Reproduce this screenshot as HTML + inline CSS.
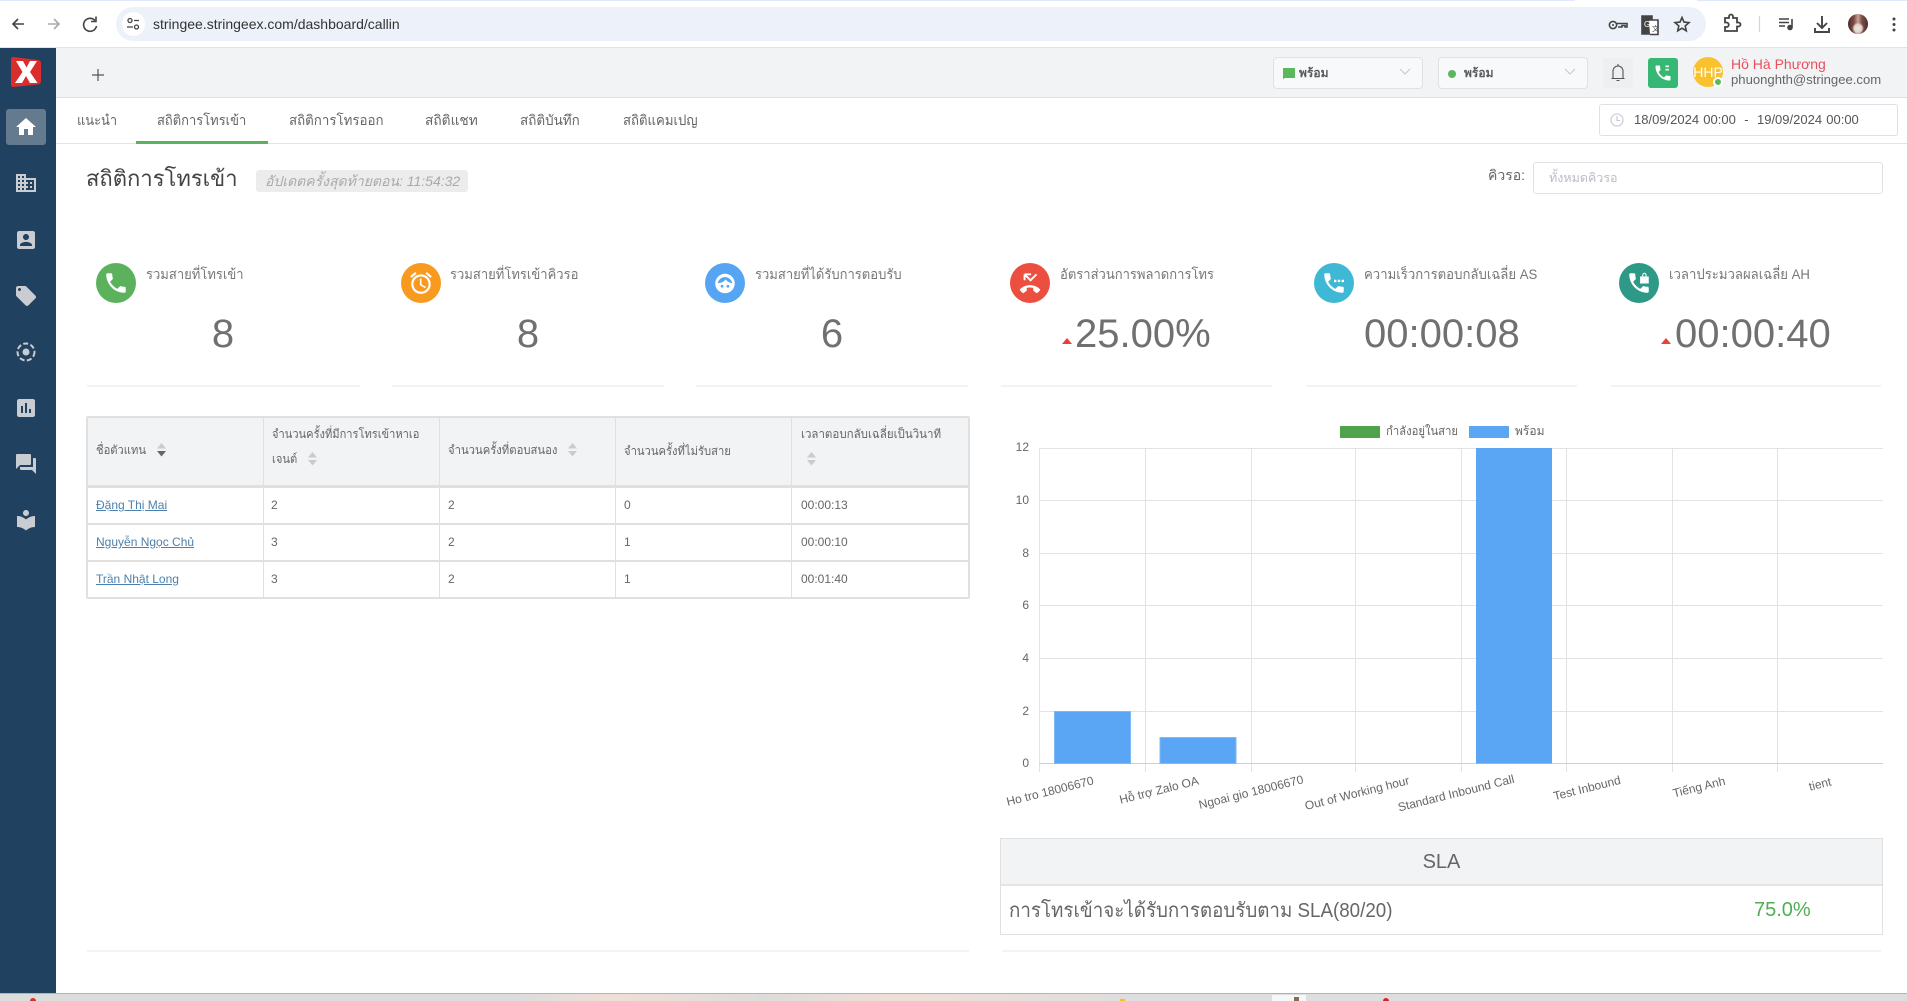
<!DOCTYPE html>
<html lang="th"><head><meta charset="utf-8"><title>Stringee</title>
<style>
html,body{margin:0;padding:0;width:1907px;height:1001px;overflow:hidden;background:#fff}
body{position:relative;font-family:"Liberation Sans","Noto Sans CJK SC",sans-serif;color:#666}
.a{position:absolute}
.t{position:absolute;white-space:nowrap;line-height:20px;height:20px;transform-origin:left center}
.b{position:absolute;box-sizing:border-box}
.ic{position:absolute;border-radius:50%;width:40px;height:40px;top:263px}
.ic svg{position:absolute;left:7px;top:7px;width:26px;height:26px;fill:#fff}
.lb{font-size:14px;color:#777;top:264px;transform:scaleX(.93)}
.n{font-size:40px;color:#707070;top:319px;line-height:30px;height:30px;transform:translateX(-50%)}
.n.l{transform:none}
.dv{position:absolute;height:2px;background:#f3f3f4;top:385px}
.tb{font-size:14px;color:#666;top:110px}
.si{position:absolute;left:14px;width:24px;height:24px;fill:#c9ccd0}
.cl{position:absolute;background:#e0e0e0}
.td{font-size:12px;color:#666}
.th{font-size:12px;color:#666}
.tri{position:absolute;width:0;height:0;border-left:5px solid transparent;border-right:5px solid transparent;border-bottom:6px solid #e8403a;top:338px}
.s{position:absolute;width:11px;height:14px}
a{color:#4d81ad;text-decoration:underline}
</style></head><body>

<!-- Chrome bar -->
<div class="b" style="left:0;top:0;width:1907px;height:48px;background:#fff;border-bottom:1px solid #e3e3e3"></div>
<div class="b" style="left:0;top:0;width:1575px;height:1px;background:#dfe9fb"></div>
<div class="b" style="left:1697px;top:0;width:210px;height:1px;background:#dfe9fb"></div>
<div class="b" style="left:116px;top:7px;width:1590px;height:34px;background:#edf2fa;border-radius:17px"></div>
<div class="b" style="left:122px;top:12px;width:23px;height:24px;background:#fff;border-radius:50%"></div>
<svg class="a" style="left:0;top:0" width="170" height="48" fill="none" stroke="#444" stroke-width="1.6">
<path d="M24 24H13M18 19l-5 5 5 5"/>
<path d="M48 24h11M54 19l5 5-5 5" stroke="#aaa"/>
<path d="M95 20.5A6.5 6.5 0 1 0 96.5 26" /><path d="M96 16.5v5h-5" />
<circle cx="130" cy="20.5" r="2" stroke-width="1.3"/><path d="M134 20.5h5M127 27h6" stroke-width="1.3"/><circle cx="136.5" cy="27" r="2" stroke-width="1.3"/>
</svg>
<div class="t" style="left:153px;top:14px;font-size:14px;color:#333">stringee.stringeex.com/dashboard/callin</div>
<svg class="a" style="left:1600px;top:0" width="307" height="48" fill="none" stroke="#444" stroke-width="1.6">
<circle cx="13" cy="25" r="3.6"/><circle cx="13" cy="25" r="1" fill="#444" stroke="none"/><path d="M17 23.5h10v3.5h-2v-1.5h-3v1.500h-4"/>
<path d="M42 16h10v18H42z" fill="#444"/><path d="M49 20h9v14.500h-8" fill="#fff"/><text x="44" y="27" font-size="8" fill="#fff" stroke="none" font-family="Liberation Sans">G</text><text x="52" y="31" font-size="7" fill="#444" stroke="none" font-family="Liberation Sans">文</text>
<path d="M82 17.500l2 4.600 5 .5-3.800 3.300 1.100 4.900-4.300-2.600-4.300 2.600 1.100-4.900-3.800-3.300 5-.5z"/>
<path d="M125 18h4v-1.500a2 2 0 0 1 4 0V18h4v4.500h1.500a2 2 0 0 1 0 4H137V31h-12v-4h1.500a2.200 2.200 0 0 0 0-4.500H125z" stroke-width="1.8"/>
<path d="M159.500 16v16" stroke="#c7d7f0" stroke-width="1.200"/>
<path d="M179 19h10M179 22.500h10M179 26h6" /><path d="M192 19v8" /><circle cx="190" cy="27.500" r="2" fill="#444"/>
<path d="M222 16v11M217 23l5 5 5-5M215 28v4h14v-4" stroke-width="1.900"/>
<circle cx="294" cy="19" r="1.500" fill="#444" stroke="none"/><circle cx="294" cy="24.500" r="1.500" fill="#444" stroke="none"/><circle cx="294" cy="30" r="1.500" fill="#444" stroke="none"/>
</svg>
<div class="a" style="left:1848px;top:14px;width:20px;height:20px;border-radius:50%;background:radial-gradient(circle at 50% 72%,#efe6e2 0,#e2d3cd 22%,transparent 34%),linear-gradient(90deg,#4a2c2a 0,#7d4d46 30%,#c9a396 50%,#7d4d46 70%,#4a2c2a 100%)"></div>

<!-- Header -->
<div class="b" style="left:56px;top:48px;width:1851px;height:50px;background:#f1f3f5;border-bottom:1px solid #dedfe1"></div>
<svg class="a" style="left:90px;top:67px" width="16" height="16" stroke="#555" stroke-width="1.200"><path d="M8 2v12M2 8h12"/></svg>

<div class="b" style="left:1273px;top:57px;width:150px;height:32px;background:#f8f9fa;border:1px solid #dfe1e6;border-radius:4px"></div>
<svg class="a" style="left:1282px;top:67px" width="14" height="14"><path d="M1 1h12v10H2.500L1 12.500z" fill="#5cb85c"/></svg>
<div class="t" style="left:1299px;top:63px;font-size:12px;font-weight:bold;color:#5a5a5a">พร้อม</div>
<svg class="a" style="left:1398px;top:67px" width="14" height="10" fill="none" stroke="#c4c6cc"><path d="M2 2l5 5 5-5"/></svg>
<div class="b" style="left:1438px;top:57px;width:150px;height:32px;background:#f8f9fa;border:1px solid #dfe1e6;border-radius:4px"></div>
<div class="a" style="left:1448px;top:70px;width:8px;height:8px;border-radius:50%;background:#5cb85c"></div>
<div class="t" style="left:1464px;top:63px;font-size:12px;font-weight:bold;color:#5a5a5a">พร้อม</div>
<svg class="a" style="left:1563px;top:67px" width="14" height="10" fill="none" stroke="#c4c6cc"><path d="M2 2l5 5 5-5"/></svg>

<div class="b" style="left:1603px;top:58px;width:30px;height:30px;background:#eeeff1;border-radius:3px"></div>
<svg class="a" style="left:1610px;top:63px" width="16" height="20" fill="none" stroke="#555" stroke-width="1.100"><path d="M3 15V8a5 5 0 0 1 10 0v7M1.500 15.500h13"/><path d="M8 1v2M6.500 17.500h3"/></svg>
<div class="b" style="left:1648px;top:58px;width:30px;height:30px;background:#36b874;border-radius:3px"></div>
<svg class="a" style="left:1653px;top:63px" width="20" height="20" viewBox="0 0 24 24" fill="#fff"><path d="M6.620 10.790c1.440 2.830 3.760 5.140 6.590 6.590l2.200-2.200c.270-.270.670-.360 1.020-.240 1.120.370 2.330.570 3.570.570.550 0 1 .450 1 1V20c0 .550-.450 1-1 1-9.390 0-17-7.610-17-17 0-.550.450-1 1-1h3.500c.550 0 1 .450 1 1 0 1.250.200 2.450.570 3.570.110.350.030.740-.250 1.020l-2.200 2.200z"/><rect x="15" y="3" width="4" height="2"/><rect x="15" y="7" width="4" height="2"/></svg>
<div class="a" style="left:1693px;top:57px;width:30px;height:30px;border-radius:50%;background:#f9c12d;color:#fff;font-size:14px;line-height:30px;text-align:center;white-space:nowrap;overflow:hidden">HHP</div>
<div class="a" style="left:1713px;top:77px;width:10px;height:10px;border-radius:50%;background:#5cb85c;border:2px solid #fff;box-sizing:border-box"></div>
<div class="t" style="left:1731px;top:54px;font-size:14px;color:#ea4f5a">Hồ Hà Phương</div>
<div class="t" style="left:1731px;top:70px;font-size:13.100px;color:#666">phuonghth@stringee.com</div>

<!-- Sidebar -->
<div class="a" style="left:0;top:48px;width:56px;height:945px;background:#204160"></div>
<svg class="a" style="left:10px;top:56px" width="32" height="32" viewBox="0 0 32 32"><path d="M3 1l25 3q3 .500 3 3v18q0 3-3 3.500L3 31q-2 0-2-3V4q0-3 2-3z" fill="#da2d2c"/><path d="M6 5h7l3.500 6.500L20 5h7l-7 11 7.500 11H20l-4-7-4 7H5l7.500-11z" fill="#fff"/></svg>
<div class="b" style="left:6px;top:109px;width:40px;height:36px;background:#647a8f;border-radius:3px"></div>
<svg class="si" style="top:115px;fill:#fff" viewBox="0 0 24 24"><path d="M10 20v-6h4v6h5v-8h3L12 3 2 12h3v8z"/></svg>
<svg class="si" style="top:171px" viewBox="0 0 24 24"><path d="M12 7V3H2v18h20V7H12zM6 19H4v-2h2v2zm0-4H4v-2h2v2zm0-4H4V9h2v2zm0-4H4V5h2v2zm4 12H8v-2h2v2zm0-4H8v-2h2v2zm0-4H8V9h2v2zm0-4H8V5h2v2zm10 12h-8v-2h2v-2h-2v-2h2v-2h-2V9h8v10zm-2-8h-2v2h2v-2zm0 4h-2v2h2v-2z"/></svg>
<svg class="si" style="top:228px" viewBox="0 0 24 24"><path d="M19 3H5c-1.100 0-2 .900-2 2v14c0 1.100.900 2 2 2h14c1.100 0 2-.900 2-2V5c0-1.100-.900-2-2-2zm-7 3c1.650 0 3 1.350 3 3s-1.350 3-3 3-3-1.350-3-3 1.350-3 3-3zm6 12H6v-1c0-2 4-3.100 6-3.100s6 1.100 6 3.100v1z"/></svg>
<svg class="si" style="top:284px" viewBox="0 0 24 24"><path d="M21.410 11.580l-9-9C12.050 2.220 11.550 2 11 2H4c-1.100 0-2 .900-2 2v7c0 .550.220 1.050.590 1.420l9 9c.360.360.860.580 1.410.580.550 0 1.050-.220 1.410-.590l7-7c.370-.360.590-.860.590-1.410 0-.550-.230-1.060-.590-1.420zM5.500 7C4.670 7 4 6.330 4 5.500S4.670 4 5.500 4 7 4.670 7 5.500 6.330 7 5.500 7z"/></svg>
<svg class="si" style="top:340px" viewBox="0 0 24 24"><circle cx="12" cy="12" r="8.500" fill="none" stroke="#c9ccd0" stroke-width="2" stroke-dasharray="5 2.400"/><circle cx="12" cy="12" r="3.500"/></svg>
<svg class="si" style="top:396px" viewBox="0 0 24 24"><path d="M19 3H5c-1.100 0-2 .900-2 2v14c0 1.100.900 2 2 2h14c1.100 0 2-.900 2-2V5c0-1.100-.900-2-2-2zM9 17H7v-7h2v7zm4 0h-2V7h2v10zm4 0h-2v-4h2v4z"/></svg>
<svg class="si" style="top:452px" viewBox="0 0 24 24"><path d="M21 6h-2v9H6v2c0 .550.450 1 1 1h11l4 4V7c0-.550-.450-1-1-1zm-4 6V3c0-.550-.450-1-1-1H3c-.550 0-1 .450-1 1v14l4-4h10c.550 0 1-.450 1-1z"/></svg>
<svg class="si" style="top:508px" viewBox="0 0 24 24"><path d="M12 11.550C9.640 9.350 6.480 8 3 8v11c3.480 0 6.640 1.350 9 3.550 2.360-2.190 5.520-3.550 9-3.550V8c-3.480 0-6.640 1.350-9 3.550zM12 8c1.660 0 3-1.340 3-3s-1.340-3-3-3-3 1.340-3 3 1.340 3 3 3z"/></svg>

<!-- Tabs -->
<div class="b" style="left:56px;top:143px;width:1851px;height:1px;background:#e2e3e5"></div>
<div class="b" style="left:136px;top:141px;width:132px;height:3px;background:#5cb25c"></div>
<div class="t tb" style="left:77px;transform:scaleX(.92)">แนะนำ</div>
<div class="t tb" style="left:157px;transform:scaleX(.925)">สถิติการโทรเข้า</div>
<div class="t tb" style="left:289px;transform:scaleX(.95)">สถิติการโทรออก</div>
<div class="t tb" style="left:425px;transform:scaleX(.98)">สถิติแชท</div>
<div class="t tb" style="left:520px;transform:scaleX(.96)">สถิติบันทึก</div>
<div class="t tb" style="left:623px;transform:scaleX(.94)">สถิติแคมเปญ</div>
<div class="b" style="left:1599px;top:104px;width:299px;height:32px;background:#fff;border:1px solid #dfe1e6;border-radius:3px"></div>
<svg class="a" style="left:1610px;top:113px" width="14" height="14" fill="none" stroke="#c5c8d4" stroke-width="1.100"><circle cx="7" cy="7" r="6"/><path d="M7 3v4.500h3"/></svg>
<div class="t" style="left:1634px;top:110px;font-size:13px;color:#555;word-spacing:.6px">18/09/2024 00:00 &nbsp;-&nbsp; 19/09/2024 00:00</div>

<!-- Title -->
<div class="t" style="left:86px;top:167px;font-size:22px;line-height:24px;height:24px;color:#444">สถิติการโทรเข้า</div>
<div class="b" style="left:256px;top:170px;width:212px;height:22px;background:#ececec;border-radius:3px"></div>
<div class="t" style="left:265px;top:171px;font-size:14px;font-style:italic;color:#aaa">อัปเดตครั้งสุดท้ายตอน: 11:54:32</div>
<div class="t" style="left:1488px;top:165px;font-size:14px;color:#666">คิวรอ:</div>
<div class="b" style="left:1533px;top:162px;width:350px;height:32px;background:#fff;border:1px solid #dfe1e6;border-radius:3px"></div>
<div class="t" style="left:1549px;top:168px;font-size:12.500px;color:#bbbcc5">ทั้งหมดคิวรอ</div>

<!-- Stats -->
<div class="ic" style="left:96px;background:#5cb25c"><svg viewBox="0 0 24 24"><path d="M6.620 10.790c1.440 2.830 3.760 5.140 6.590 6.590l2.200-2.200c.270-.270.670-.360 1.020-.240 1.120.370 2.330.570 3.570.570.550 0 1 .450 1 1V20c0 .550-.450 1-1 1-9.390 0-17-7.610-17-17 0-.550.450-1 1-1h3.500c.550 0 1 .450 1 1 0 1.250.200 2.450.570 3.570.110.350.030.740-.250 1.020l-2.200 2.200z"/></svg></div>
<div class="t lb" style="left:146px">รวมสายที่โทรเข้า</div>
<div class="t n" style="left:223px">8</div>
<div class="dv" style="left:87px;width:273px"></div>

<div class="ic" style="left:401px;background:#f99a20"><svg viewBox="0 0 24 24"><path d="M22 5.720l-4.600-3.860-1.290 1.530 4.600 3.860L22 5.720zM7.880 3.390L6.600 1.860 2 5.710l1.290 1.530 4.590-3.850zM12.500 8H11v6l4.750 2.850.75-1.230-4-2.370V8zM12 4c-4.970 0-9 4.030-9 9s4.030 9 9 9 9-4.030 9-9-4.030-9-9-9zm0 16c-3.870 0-7-3.130-7-7s3.130-7 7-7 7 3.130 7 7-3.130 7-7 7z"/></svg></div>
<div class="t lb" style="left:450px">รวมสายที่โทรเข้าคิวรอ</div>
<div class="t n" style="left:528px">8</div>
<div class="dv" style="left:392px;width:272px"></div>

<div class="ic" style="left:705px;background:#56a5f2"><svg viewBox="0 0 24 24"><circle cx="12" cy="12.500" r="9"/><path d="M5.300 12.200A6.800 6.800 0 0 1 18.700 12.200Q15 11.800 12.500 8.800Q10.500 12 5.300 12.200z" fill="#56a5f2"/><circle cx="9.300" cy="15" r="1.300" fill="#56a5f2"/><circle cx="14.700" cy="15" r="1.300" fill="#56a5f2"/></svg></div>
<div class="t lb" style="left:755px">รวมสายที่ได้รับการตอบรับ</div>
<div class="t n" style="left:832px">6</div>
<div class="dv" style="left:696px;width:272px"></div>

<div class="ic" style="left:1010px;background:#ec4f3f"><svg viewBox="0 0 24 24"><path d="M12 14c-3 0-6 1-9 3.500-.500.500-.500 1 0 1.500l2 2c.500.500 1 .500 1.500 0l2.500-2v-2.500c2-.500 4-.500 6 0V19l2.500 2c.500.500 1 .500 1.500 0l2-2c.500-.500.500-1 0-1.500C18 15 15 14 12 14z"/><path d="M7 4h6M7 4v5.500M7.500 4.500l5 5L18 4" fill="none" stroke="#fff" stroke-width="1.800"/></svg></div>
<div class="t lb" style="left:1060px">อัตราส่วนการพลาดการโทร</div>
<div class="tri" style="left:1062px"></div>
<div class="t n l" style="left:1075px">25.00%</div>
<div class="dv" style="left:1001px;width:271px"></div>

<div class="ic" style="left:1314px;background:#3eb8d4"><svg viewBox="0 0 24 24"><path d="M6.620 10.790c1.440 2.830 3.760 5.140 6.590 6.590l2.200-2.200c.270-.270.670-.360 1.020-.240 1.120.370 2.330.570 3.570.570.550 0 1 .450 1 1V20c0 .550-.450 1-1 1-9.390 0-17-7.610-17-17 0-.550.450-1 1-1h3.500c.550 0 1 .450 1 1 0 1.250.200 2.450.570 3.570.110.350.030.740-.250 1.020l-2.200 2.200z"/><rect x="12" y="9" width="2.200" height="2.200"/><rect x="15.500" y="9" width="2.200" height="2.200"/><rect x="19" y="9" width="2.200" height="2.200"/></svg></div>
<div class="t lb" style="left:1364px;transform:scaleX(.94)">ความเร็วการตอบกลับเฉลี่ย AS</div>
<div class="t n l" style="left:1364px">00:00:08</div>
<div class="dv" style="left:1306px;width:271px"></div>

<div class="ic" style="left:1619px;background:#2d9986"><svg viewBox="0 0 24 24"><path d="M6.620 10.790c1.440 2.830 3.760 5.140 6.590 6.590l2.200-2.200c.270-.270.670-.360 1.020-.240 1.120.370 2.330.570 3.570.570.550 0 1 .450 1 1V20c0 .550-.450 1-1 1-9.390 0-17-7.610-17-17 0-.550.450-1 1-1h3.500c.550 0 1 .450 1 1 0 1.250.200 2.450.570 3.570.110.350.030.740-.250 1.020l-2.200 2.200z"/><path d="M13 6h8v6.500h-8zM15 6V4.500a2 2 0 0 1 4 0V6h-1V4.500a1 1 0 0 0-2 0V6z"/></svg></div>
<div class="t lb" style="left:1669px;transform:scaleX(.94)">เวลาประมวลผลเฉลี่ย AH</div>
<div class="tri" style="left:1661px"></div>
<div class="t n l" style="left:1675px">00:00:40</div>
<div class="dv" style="left:1611px;width:270px"></div>

<!-- Table -->
<div class="b" style="left:86px;top:416px;width:884px;height:183px;border:2px solid #e0e0e0;border-bottom-width:2px;border-radius:2px"></div>
<div class="b" style="left:88px;top:418px;width:880px;height:67px;background:#f1f3f5"></div>
<div class="cl" style="left:88px;top:485px;width:880px;height:3px"></div>
<div class="cl" style="left:88px;top:523px;width:880px;height:2px"></div>
<div class="cl" style="left:88px;top:560px;width:880px;height:2px"></div>
<div class="cl" style="left:263px;top:418px;width:1px;height:180px"></div>
<div class="cl" style="left:439px;top:418px;width:1px;height:180px"></div>
<div class="cl" style="left:615px;top:418px;width:1px;height:180px"></div>
<div class="cl" style="left:791px;top:418px;width:1px;height:180px"></div>

<div class="t th" style="left:96px;top:440px;transform:scaleX(.93)">ชื่อตัวแทน</div>
<div class="t th" style="left:272px;top:424px;transform:scaleX(.925)">จำนวนครั้งที่มีการโทรเข้าหาเอ</div>
<div class="t th" style="left:272px;top:449px;transform:scaleX(.93)">เจนต์</div>
<div class="t th" style="left:448px;top:440px;transform:scaleX(.94)">จำนวนครั้งที่ตอบสนอง</div>
<div class="t th" style="left:624px;top:441px;transform:scaleX(.935)">จำนวนครั้งที่ไม่รับสาย</div>
<div class="t th" style="left:801px;top:424px;transform:scaleX(.96)">เวลาตอบกลับเฉลี่ยเป็นวินาที</div>
<svg class="s" style="left:156px;top:443px"><path d="M5.500 0L10 5.500H1z" fill="#c9cbd0"/><path d="M1 8h9l-4.500 5.500z" fill="#666"/></svg>
<svg class="s" style="left:307px;top:452px"><path d="M5.500 0L10 5.500H1z" fill="#c9cbd0"/><path d="M1 8h9l-4.500 5.500z" fill="#c9cbd0"/></svg>
<svg class="s" style="left:567px;top:443px"><path d="M5.500 0L10 5.500H1z" fill="#c9cbd0"/><path d="M1 8h9l-4.500 5.500z" fill="#c9cbd0"/></svg>
<svg class="s" style="left:806px;top:452px"><path d="M5.500 0L10 5.500H1z" fill="#c9cbd0"/><path d="M1 8h9l-4.500 5.500z" fill="#c9cbd0"/></svg>

<div class="t td" style="left:96px;top:495px"><a>Đặng Thị Mai</a></div>
<div class="t td" style="left:271px;top:495px">2</div><div class="t td" style="left:448px;top:495px">2</div><div class="t td" style="left:624px;top:495px">0</div><div class="t td" style="left:801px;top:495px">00:00:13</div>
<div class="t td" style="left:96px;top:532px"><a>Nguyễn Ngọc Chủ</a></div>
<div class="t td" style="left:271px;top:532px">3</div><div class="t td" style="left:448px;top:532px">2</div><div class="t td" style="left:624px;top:532px">1</div><div class="t td" style="left:801px;top:532px">00:00:10</div>
<div class="t td" style="left:96px;top:569px"><a>Trần Nhật Long</a></div>
<div class="t td" style="left:271px;top:569px">3</div><div class="t td" style="left:448px;top:569px">2</div><div class="t td" style="left:624px;top:569px">1</div><div class="t td" style="left:801px;top:569px">00:01:40</div>

<!-- Chart -->
<svg class="a" style="left:990px;top:410px" width="917" height="420" font-family="Liberation Sans" font-size="12" fill="#666">
<g stroke="#e3e3e3" stroke-width="1">
<path d="M49.500 38v324M155.500 38v324M261.500 38v324M365.500 38v324M471.500 38v324M576.500 38v324M682.500 38v324M787.500 38v324"/>
<path d="M49 38.500h844M49 90.500h844M49 143.500h844M49 195.500h844M49 248.500h844M49 301.500h844"/>
</g>
<path d="M49 353.500h844" stroke="#cfcfcf"/>
<rect x="350" y="16" width="40" height="12" fill="#4fa34b"/>
<rect x="479" y="16" width="40" height="12" fill="#5aa5f4"/>
<rect x="64.500" y="301.500" width="76" height="52" fill="#5aa5f4" stroke="#7cb9f6"/>
<rect x="170" y="327.500" width="76" height="26" fill="#5aa5f4" stroke="#7cb9f6"/>
<rect x="486" y="38" width="76" height="315.500" fill="#5aa5f4"/>
<g text-anchor="end">
<text x="39" y="41">12</text><text x="39" y="94">10</text><text x="39" y="147">8</text><text x="39" y="199">6</text><text x="39" y="252">4</text><text x="39" y="305">2</text><text x="39" y="357">0</text>
</g>
<g text-anchor="middle">
<text transform="translate(61 385) rotate(-14)">Ho tro 18006670</text>
<text transform="translate(170 384) rotate(-14)">Hỗ trợ Zalo OA</text>
<text transform="translate(262 386) rotate(-14)">Ngoai gio 18006670</text>
<text transform="translate(368 387) rotate(-14)">Out of Working hour</text>
<text transform="translate(467 387) rotate(-14)">Standard Inbound Call</text>
<text transform="translate(598 382) rotate(-14)">Test Inbound</text>
<text transform="translate(710 381) rotate(-14)">Tiếng Anh</text>
<text transform="translate(831 378) rotate(-14)">tient</text>
</g>
</svg>
<div class="t" style="left:1386px;top:421px;font-size:12px;color:#666;transform:scaleX(.94)">กำลังอยู่ในสาย</div>
<div class="t" style="left:1515px;top:421px;font-size:12px;color:#666">พร้อม</div>

<!-- SLA -->
<div class="b" style="left:1000px;top:838px;width:883px;height:97px;border:1px solid #e0e0e0"></div>
<div class="b" style="left:1001px;top:839px;width:881px;height:47px;background:#f1f3f5;border-bottom:2px solid #e4e4e4"></div>
<div class="t" style="left:1000px;width:883px;text-align:center;top:852px;font-size:20px;color:#666">SLA</div>
<div class="t" style="left:1009px;top:901px;font-size:20px;color:#666;transform:scaleX(.938)">การโทรเข้าจะได้รับการตอบรับตาม SLA(80/20)</div>
<div class="t" style="left:1754px;top:900px;font-size:20px;color:#4fae55">75.0%</div>

<!-- Bottom -->
<div class="dv" style="left:87px;width:882px;top:950px"></div>
<div class="dv" style="left:1002px;width:879px;top:950px"></div>
<div class="a" style="left:0;top:993px;width:1907px;height:8px;border-top:1px solid #b3b3b3;box-sizing:border-box;background:linear-gradient(90deg,#dcdcdc 0,#dcdcdc 27%,#efdfd6 32%,#dedcda 40%,#efdfd6 47%,#dedede 60%,#dedede 100%)"></div>
<div class="a" style="left:30px;top:998px;width:6px;height:3px;background:#c33;border-radius:3px 3px 0 0"></div>
<div class="a" style="left:1120px;top:999px;width:5px;height:2px;background:#f5c518"></div>
<div class="a" style="left:1272px;top:995px;width:34px;height:6px;background:#f7f7f7"></div>
<div class="a" style="left:1294px;top:997px;width:5px;height:4px;background:#8a6a50"></div>
<div class="a" style="left:1383px;top:998px;width:6px;height:3px;background:#e02020;border-radius:3px 3px 0 0"></div>
</body></html>
